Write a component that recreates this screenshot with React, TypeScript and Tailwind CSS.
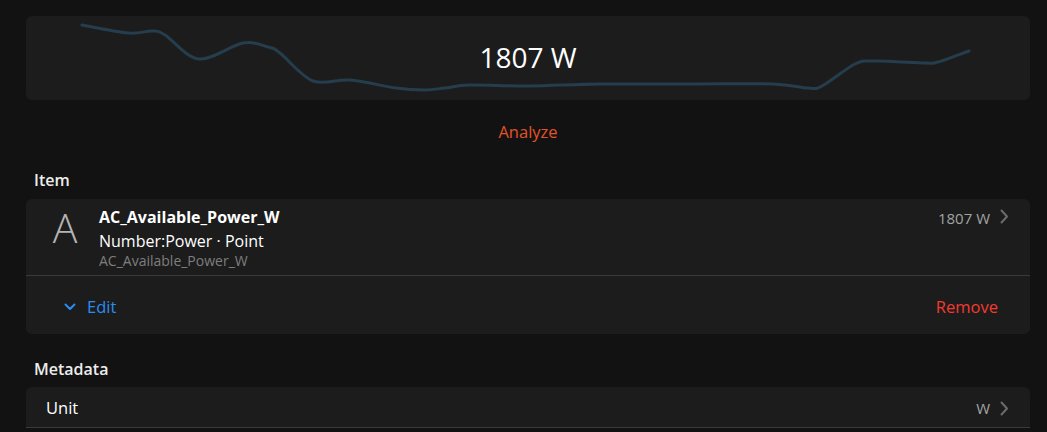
import React from "react";

const pts: [number, number][] = [
  [82, 25], [128, 33], [152, 31], [165, 35], [199, 59], [243, 43], [268, 47], [280, 53],
  [313, 81], [350, 80], [396, 88], [425, 90], [445, 88], [470, 85], [530, 86], [600, 84],
  [690, 84], [773, 84], [808, 88], [822, 86], [855, 64], [875, 61], [925, 63], [938, 62], [969, 51],
];

function catmull(p: [number, number][]): string {
  let d = `M${p[0][0]},${p[0][1]}`;
  for (let i = 0; i < p.length - 1; i++) {
    const p0 = p[i - 1] || p[i];
    const p1 = p[i];
    const p2 = p[i + 1];
    const p3 = p[i + 2] || p2;
    const c1x = p1[0] + (p2[0] - p0[0]) / 6;
    const c1y = p1[1] + (p2[1] - p0[1]) / 6;
    const c2x = p2[0] - (p3[0] - p1[0]) / 6;
    const c2y = p2[1] - (p3[1] - p1[1]) / 6;
    d += ` C${c1x.toFixed(1)},${c1y.toFixed(1)} ${c2x.toFixed(1)},${c2y.toFixed(1)} ${p2[0]},${p2[1]}`;
  }
  return d;
}

const local = pts.map(([x, y]) => [x - 26, y - 16] as [number, number]);

const Chevron = () => (
  <svg width="9" height="15" viewBox="0 0 9 15" className="shrink-0">
    <path d="M1.5 1.5 L7 7.5 L1.5 13.5" fill="none" stroke="#6b6b6b" strokeWidth="2" strokeLinecap="round" strokeLinejoin="round" />
  </svg>
);

export default function App() {
  return (
    <div
      className="w-[1047px] h-[432px] overflow-hidden bg-[#121212] text-white"
      style={{ fontFamily: '"Open Sans", "Noto Sans", sans-serif' }}
    >
      <div className="pl-[26px] pr-[17px] pt-[16px]">
        {/* chart card */}
        <div className="relative h-[84px] rounded-[6px] bg-[#1c1c1c] flex items-center justify-center">
          <svg className="absolute inset-0" width="1004" height="84" viewBox="0 0 1004 84">
            <path d={catmull(local)} fill="none" stroke="#253d4d" strokeWidth="3" strokeLinecap="round" />
          </svg>
          <span className="relative text-[28px] leading-none text-white -mt-[3px]">1807 W</span>
        </div>

        <div className="h-[64px] flex items-center justify-center">
          <span className="text-[16.5px] text-[#e2522a]">Analyze</span>
        </div>

        <div className="mt-[6px] pl-[8px] h-[19px] flex items-center text-[16px] font-semibold text-[#ededed]">Item</div>

        <div className="mt-[10px] rounded-[6px] bg-[#1c1c1c]">
          <div className="h-[77px] flex border-b border-[#3a3a3a]">
            <div className="w-[73px] flex justify-center pl-[5px] pt-[4px]">
              <span className="text-[41px] font-light leading-[48px] text-[#b4b4b4]">A</span>
            </div>
            <div className="flex-1 pt-[7px]">
              <div className="text-[16px] font-bold leading-[22px] text-white">AC_Available_Power_W</div>
              <div className="text-[16px] leading-[26px] text-white">Number:Power · Point</div>
              <div className="text-[14px] leading-[14px] text-[#7e7e7e]">AC_Available_Power_W</div>
            </div>
            <div className="flex items-start gap-[10px] pr-[21px] pt-[9px]">
              <span className="text-[15px] leading-[20px] text-[#a3a3a3]">1807 W</span>
              <div className="pt-[1px]"><Chevron /></div>
            </div>
          </div>
          <div className="h-[58px] flex items-center justify-between pl-[38px] pr-[32px] pt-[4px]">
            <div className="flex items-center gap-[11px] text-[#2a8cf0]">
              <svg width="12" height="8" viewBox="0 0 12 8">
                <path d="M1.5 1.5 L6 6 L10.5 1.5" fill="none" stroke="#2a8cf0" strokeWidth="2" strokeLinecap="round" strokeLinejoin="round" />
              </svg>
              <span className="text-[16.5px]">Edit</span>
            </div>
            <span className="text-[16.5px] text-[#f43a2f]">Remove</span>
          </div>
        </div>

        <div className="mt-[25px] pl-[8px] h-[19px] flex items-center text-[16px] font-semibold text-[#ededed]">Metadata</div>

        <div className="mt-[9px] rounded-t-[6px] bg-[#1c1c1c] h-[41px] border-b border-[#3a3a3a] flex items-center justify-between pl-[20px] pr-[21px] pt-[2px]">
          <span className="text-[16.5px] text-white">Unit</span>
          <div className="flex items-center gap-[10px]">
            <span className="text-[15px] text-[#a3a3a3]">W</span>
            <Chevron />
          </div>
        </div>
      </div>
    </div>
  );
}
